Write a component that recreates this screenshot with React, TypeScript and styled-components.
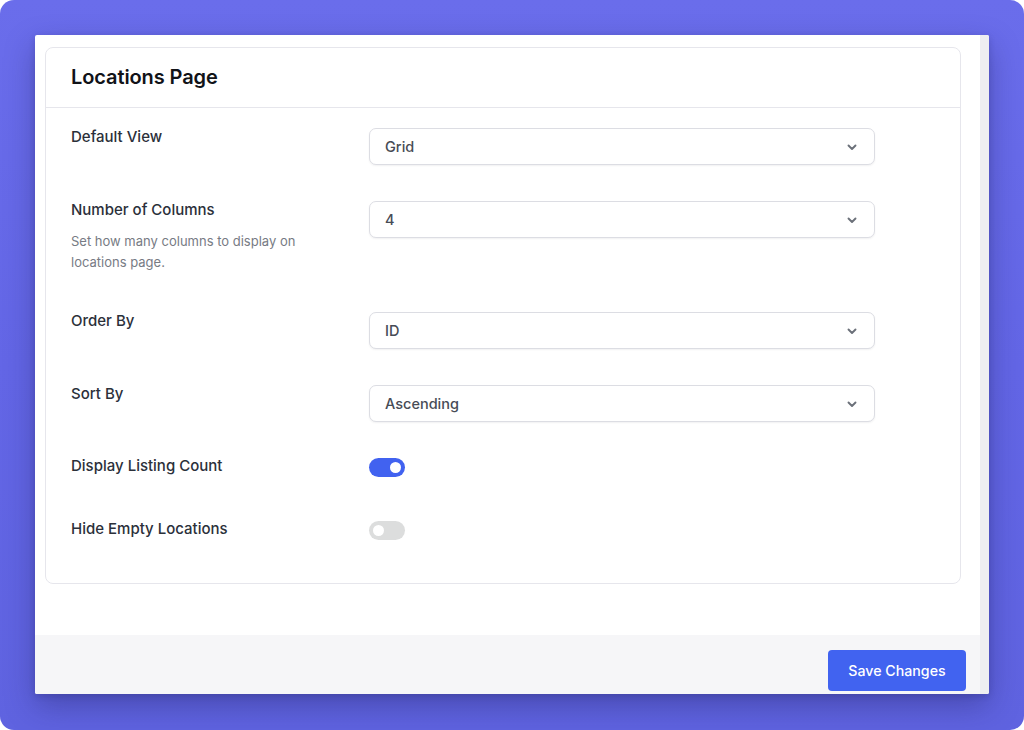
import React, { useState } from "react";
import styled, { createGlobalStyle } from "styled-components";

const Global = createGlobalStyle`
  html, body { margin: 0; padding: 0; background: #ffffff; }
  body { font-family: Inter, "Noto Sans", "Liberation Sans", sans-serif; }
  * { box-sizing: border-box; }
`;

const Backdrop = styled.div`
  width: 1024px;
  height: 730px;
  border-radius: 14px;
  background: linear-gradient(180deg, #6a6deb 0%, #6366e6 50%, #5f63e0 100%);
  padding: 35px 0 0 35px;
`;

const Card = styled.div`
  width: 954px;
  height: 659px;
  background: #ffffff;
  border-radius: 2px;
  box-shadow: 0 12px 30px rgba(30, 30, 90, 0.35), 0 2px 6px rgba(30, 30, 90, 0.2);
  display: flex;
  overflow: hidden;
`;

const MainColumn = styled.div`
  flex: 1;
  display: flex;
  flex-direction: column;
`;

const Scrollbar = styled.div`
  width: 9px;
  background: #eeeef1;
`;

const Content = styled.div`
  flex: 1;
  padding: 12px 19px 0 10px;
`;

const Panel = styled.section`
  border: 1px solid #e6e6ec;
  border-radius: 8px;
  background: #ffffff;
`;

const PanelHeader = styled.header`
  height: 60px;
  display: flex;
  align-items: center;
  padding: 0 25px;
  border-bottom: 1px solid #e6e6ec;
`;

const Title = styled.h2`
  margin: 0;
  font-size: 20px;
  font-weight: 600;
  color: #111318;
  letter-spacing: -0.1px;
  transform: translateY(-1px);
`;

const PanelBody = styled.div`
  padding: 20px 25px 0;
`;

const Row = styled.div<{ $height: number }>`
  display: flex;
  align-items: flex-start;
  height: ${(p) => p.$height}px;
`;

const LabelCol = styled.div`
  width: 298px;
  flex-shrink: 0;
  padding-right: 24px;
`;

const Label = styled.div`
  font-size: 15px;
  line-height: 18px;
  font-weight: 500;
  color: #2b303a;
`;

const Description = styled.div`
  margin-top: 12px;
  font-size: 13px;
  line-height: 21px;
  color: #777b84;
`;

const SelectBox = styled.div`
  width: 506px;
  height: 37px;
  border: 1px solid #dcdde3;
  border-radius: 7px;
  box-shadow: 0 1px 2px rgba(16, 24, 40, 0.06);
  display: flex;
  align-items: center;
  justify-content: space-between;
  padding: 0 16px 0 15px;
  font-size: 14.5px;
  font-weight: 500;
  color: #474c56;
  background: #ffffff;
`;

const Chevron = styled.svg`
  width: 12px;
  height: 12px;
  color: #6b7079;
`;

const Toggle = styled.button<{ $on: boolean }>`
  width: 36px;
  height: 19px;
  border: none;
  padding: 0 4px;
  border-radius: 10px;
  margin-top: 1px;
  background: ${(p) => (p.$on ? "#4162f0" : "#dcdddd")};
  display: flex;
  align-items: center;
  justify-content: ${(p) => (p.$on ? "flex-end" : "flex-start")};
  cursor: pointer;
`;

const Knob = styled.span`
  width: 11px;
  height: 11px;
  border-radius: 50%;
  background: #ffffff;
`;

const Footer = styled.footer`
  height: 60px;
  margin-top: 51px;
  background: #f6f6f8;
  display: flex;
  justify-content: flex-end;
  align-items: flex-start;
  padding: 15px 14px 0 0;
`;

const SaveButton = styled.button`
  width: 138px;
  height: 41px;
  border: none;
  border-radius: 4px;
  background: #4163f0;
  color: #ffffff;
  font-family: inherit;
  font-size: 14.2px;
  font-weight: 500;
  cursor: pointer;
`;

const Select = ({ value }: { value: string }) => (
  <SelectBox>
    <span>{value}</span>
    <Chevron viewBox="0 0 12 12" fill="none">
      <path d="M2.5 4.5 L6 8 L9.5 4.5" stroke="currentColor" strokeWidth="1.9" strokeLinecap="round" strokeLinejoin="round" />
    </Chevron>
  </SelectBox>
);

export default function App() {
  const [count, setCount] = useState(true);
  const [hide, setHide] = useState(false);
  return (
    <>
      <Global />
      <Backdrop>
        <Card>
          <MainColumn>
            <Content>
              <Panel>
                <PanelHeader>
                  <Title>Locations Page</Title>
                </PanelHeader>
                <PanelBody>
                  <Row $height={73}>
                    <LabelCol>
                      <Label>Default View</Label>
                    </LabelCol>
                    <Select value="Grid" />
                  </Row>
                  <Row $height={111}>
                    <LabelCol>
                      <Label>Number of Columns</Label>
                      <Description>Set how many columns to display on locations page.</Description>
                    </LabelCol>
                    <Select value="4" />
                  </Row>
                  <Row $height={73}>
                    <LabelCol>
                      <Label>Order By</Label>
                    </LabelCol>
                    <Select value="ID" />
                  </Row>
                  <Row $height={72}>
                    <LabelCol>
                      <Label>Sort By</Label>
                    </LabelCol>
                    <Select value="Ascending" />
                  </Row>
                  <Row $height={63}>
                    <LabelCol>
                      <Label>Display Listing Count</Label>
                    </LabelCol>
                    <Toggle $on={count} onClick={() => setCount(!count)} aria-label="Display Listing Count">
                      <Knob />
                    </Toggle>
                  </Row>
                  <Row $height={63}>
                    <LabelCol>
                      <Label>Hide Empty Locations</Label>
                    </LabelCol>
                    <Toggle $on={hide} onClick={() => setHide(!hide)} aria-label="Hide Empty Locations">
                      <Knob />
                    </Toggle>
                  </Row>
                </PanelBody>
              </Panel>
            </Content>
            <Footer>
              <SaveButton>Save Changes</SaveButton>
            </Footer>
          </MainColumn>
          <Scrollbar />
        </Card>
      </Backdrop>
    </>
  );
}
